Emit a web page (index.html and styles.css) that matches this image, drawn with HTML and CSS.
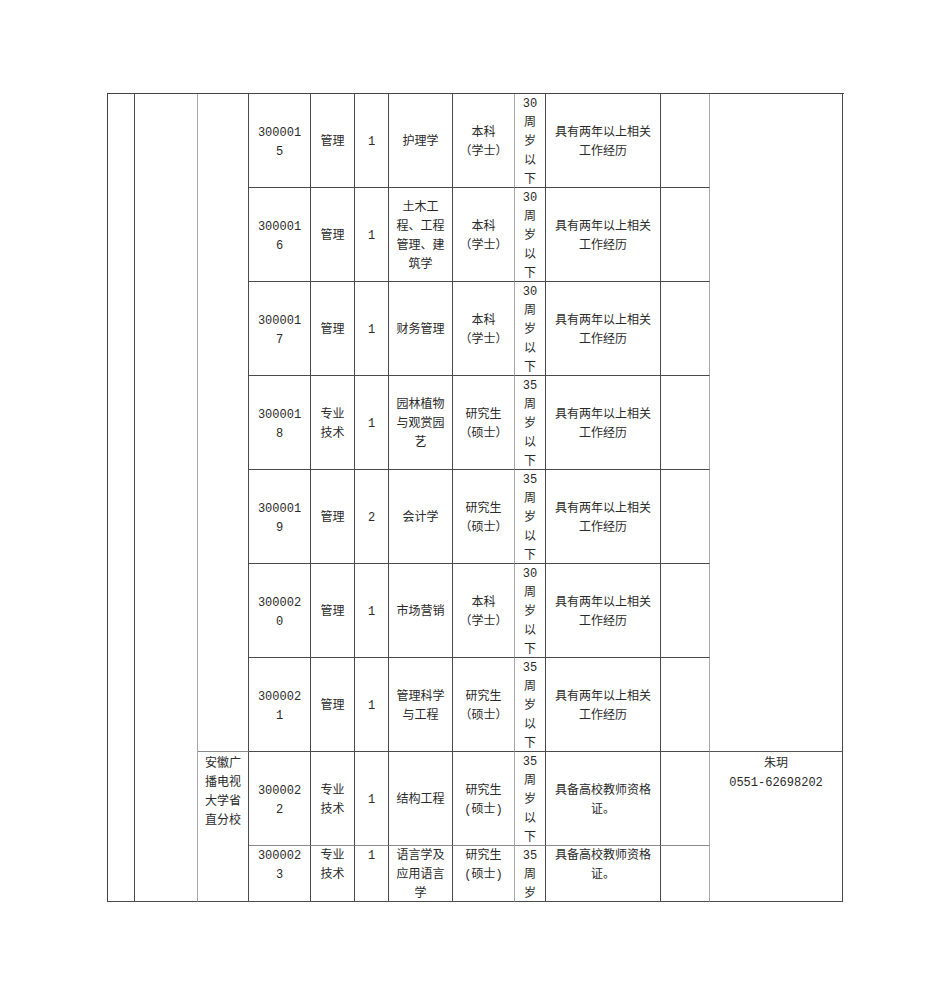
FILE: index.html
```html
<!DOCTYPE html>
<html lang="zh-CN">
<head>
<meta charset="utf-8">
<title>岗位表</title>
<link rel="stylesheet" href="styles.css">
</head>
<body>
<div class="sheet">
  <div class="c span-a c1"></div>
  <div class="c span-a c2 lr"></div>
  <div class="c span-b c3"></div>
  <div class="c span-c c3 school"><div>安徽广<br>播电视<br>大学省<br>直分校</div></div>
  <div class="c span-b c12"></div>
  <div class="c span-c c12 contact"><div>朱玥<br>0551-62698202</div></div>

  <div class="c"><div>300001<br>5</div></div>
  <div class="c"><div>管理</div></div>
  <div class="c"><div>1</div></div>
  <div class="c"><div>护理学</div></div>
  <div class="c lr"><div>本科<br>（学士）</div></div>
  <div class="c"><div>30<br>周<br>岁<br>以<br>下</div></div>
  <div class="c"><div>具有两年以上相关<br>工作经历</div></div>
  <div class="c lr"><div></div></div>

  <div class="c"><div>300001<br>6</div></div>
  <div class="c"><div>管理</div></div>
  <div class="c"><div>1</div></div>
  <div class="c"><div>土木工<br>程、工程<br>管理、建<br>筑学</div></div>
  <div class="c lr"><div>本科<br>（学士）</div></div>
  <div class="c"><div>30<br>周<br>岁<br>以<br>下</div></div>
  <div class="c"><div>具有两年以上相关<br>工作经历</div></div>
  <div class="c lr"><div></div></div>

  <div class="c"><div>300001<br>7</div></div>
  <div class="c"><div>管理</div></div>
  <div class="c"><div>1</div></div>
  <div class="c"><div>财务管理</div></div>
  <div class="c lr"><div>本科<br>（学士）</div></div>
  <div class="c"><div>30<br>周<br>岁<br>以<br>下</div></div>
  <div class="c"><div>具有两年以上相关<br>工作经历</div></div>
  <div class="c lr"><div></div></div>

  <div class="c"><div>300001<br>8</div></div>
  <div class="c"><div>专业<br>技术</div></div>
  <div class="c"><div>1</div></div>
  <div class="c"><div>园林植物<br>与观赏园<br>艺</div></div>
  <div class="c lr"><div>研究生<br>（硕士）</div></div>
  <div class="c"><div>35<br>周<br>岁<br>以<br>下</div></div>
  <div class="c"><div>具有两年以上相关<br>工作经历</div></div>
  <div class="c lr"><div></div></div>

  <div class="c"><div>300001<br>9</div></div>
  <div class="c"><div>管理</div></div>
  <div class="c"><div>2</div></div>
  <div class="c"><div>会计学</div></div>
  <div class="c lr"><div>研究生<br>（硕士）</div></div>
  <div class="c"><div>35<br>周<br>岁<br>以<br>下</div></div>
  <div class="c"><div>具有两年以上相关<br>工作经历</div></div>
  <div class="c lr"><div></div></div>

  <div class="c"><div>300002<br>0</div></div>
  <div class="c"><div>管理</div></div>
  <div class="c"><div>1</div></div>
  <div class="c"><div>市场营销</div></div>
  <div class="c lr"><div>本科<br>（学士）</div></div>
  <div class="c"><div>30<br>周<br>岁<br>以<br>下</div></div>
  <div class="c"><div>具有两年以上相关<br>工作经历</div></div>
  <div class="c lr"><div></div></div>

  <div class="c"><div>300002<br>1</div></div>
  <div class="c"><div>管理</div></div>
  <div class="c"><div>1</div></div>
  <div class="c"><div>管理科学<br>与工程</div></div>
  <div class="c lr"><div>研究生<br>（硕士）</div></div>
  <div class="c"><div>35<br>周<br>岁<br>以<br>下</div></div>
  <div class="c"><div>具有两年以上相关<br>工作经历</div></div>
  <div class="c lr"><div></div></div>

  <div class="c lb"><div>300002<br>2</div></div>
  <div class="c lb"><div>专业<br>技术</div></div>
  <div class="c lb"><div>1</div></div>
  <div class="c lb"><div>结构工程</div></div>
  <div class="c lr lb"><div>研究生<br>(硕士)</div></div>
  <div class="c lb"><div>35<br>周<br>岁<br>以<br>下</div></div>
  <div class="c lb"><div>具备高校教师资格<br>证。</div></div>
  <div class="c lr lb"><div></div></div>

  <div class="c last"><div>300002<br>3</div></div>
  <div class="c last"><div>专业<br>技术</div></div>
  <div class="c last"><div>1</div></div>
  <div class="c last"><div>语言学及<br>应用语言<br>学</div></div>
  <div class="c last lr"><div>研究生<br>(硕士)</div></div>
  <div class="c last"><div>35<br>周<br>岁<br>以<br>下</div></div>
  <div class="c last"><div>具备高校教师资格<br>证。</div></div>
  <div class="c last lr"><div></div></div>
</div>
</body>
</html>
```

FILE: styles.css
```css
html, body {
  margin: 0;
  padding: 0;
  background: #fff;
}
body {
  padding: 93px 0 0 107px;
}
.sheet {
  display: grid;
  grid-template-columns: 27px 63px 51px 62px 44px 34px 64px 62px 31px 115px 49px 133px;
  grid-template-rows: repeat(8, 94px) 56px;
  width: 736px;
  border-top: 1px solid #444;
  border-left: 1px solid #444;
  font-family: "Liberation Mono", "Noto Sans CJK SC", monospace;
  font-size: 12px;
  line-height: 19px;
  color: #2a2a2a;
  text-spacing-trim: space-all;
}
.c {
  box-sizing: border-box;
  border-right: 1px solid #4a4a4a;
  border-bottom: 1px solid #4a4a4a;
  display: flex;
  align-items: center;
  justify-content: center;
  text-align: center;
  white-space: nowrap;
  min-width: 0;
  padding-top: 4px;
}
.c > div {
  flex: none;
}
.lr {
  border-right-color: #a8a8a8;
}
.lb {
  border-bottom-color: #8a8a8a;
}
.span-a {
  grid-row: 1 / 10;
}
.span-b {
  grid-row: 1 / 8;
}
.span-c {
  grid-row: 8 / 10;
}
.c1 { grid-column: 1; }
.c2 { grid-column: 2; }
.c3 { grid-column: 3; }
.c12 { grid-column: 12; }
.c2.lr { border-right-color: #a8a8a8; }
.c3.span-b { border-bottom-color: #8a8a8a; }
.c12.span-b { border-bottom-color: #555; }
.school {
  align-items: flex-start;
  justify-content: flex-start;
  text-align: left;
  padding: 3px 0 0 7px;
}
.contact {
  align-items: flex-start;
  padding-top: 3px;
}
.last {
  align-items: flex-start;
  overflow: hidden;
  padding-top: 1px;
}
```
